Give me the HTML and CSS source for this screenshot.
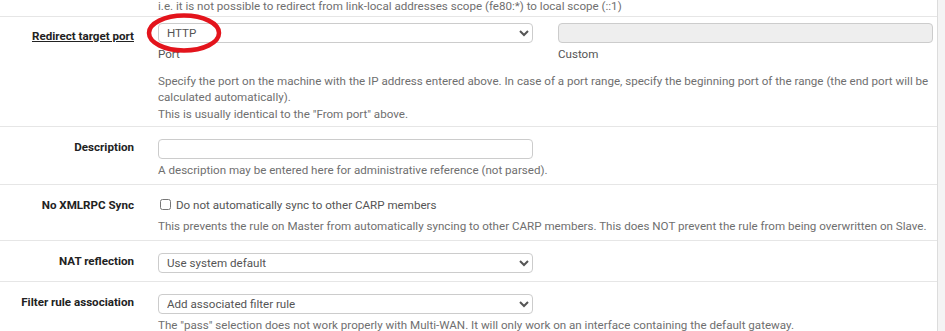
FILE: index.html
```html
<!DOCTYPE html>
<html lang="en">

<head>
  <meta charset="UTF-8" />
  <title>Port Forward - Edit</title>
  <link rel="stylesheet" href="styles.css">
</head>

<body>
  <div class="panel">
    <div class="row row-top">
      <div class="label"></div>
      <div class="field">
        <span class="help">i.e. it is not possible to redirect from link-local addresses scope (fe80:*) to local scope (::1)</span>
      </div>
    </div>

    <div class="row row-port">
      <div class="label"><span class="underline">Redirect target port</span></div>
      <div class="field">
        <div class="pair">
          <div class="col">
            <div class="mark-wrap">
              <select class="control">
                <option>HTTP</option>
              </select>
              <svg class="mark" width="80" height="44" viewBox="0 0 80 44">
                <ellipse cx="40" cy="22" rx="35" ry="17.5" fill="none" stroke="#e3141c" stroke-width="4.5" />
              </svg>
            </div>
            <span class="sub">Port</span>
          </div>
          <div class="col">
            <input class="control" type="text" disabled>
            <span class="sub">Custom</span>
          </div>
        </div>
        <span class="help block">Specify the port on the machine with the IP address entered above. In case of a port range, specify the beginning port of the range (the end port will be calculated automatically).<br>This is usually identical to the "From port" above.</span>
      </div>
    </div>

    <div class="row row-desc">
      <div class="label">Description</div>
      <div class="field">
        <input class="control half" type="text">
        <span class="help">A description may be entered here for administrative reference (not parsed).</span>
      </div>
    </div>

    <div class="row row-loose">
      <div class="label">No XMLRPC Sync</div>
      <div class="field">
        <label class="check"><input type="checkbox"> Do not automatically sync to other CARP members</label>
        <span class="help">This prevents the rule on Master from automatically syncing to other CARP members. This does NOT prevent the rule from being overwritten on Slave.</span>
      </div>
    </div>

    <div class="row row-plain">
      <div class="label">NAT reflection</div>
      <div class="field">
        <select class="control half">
          <option>Use system default</option>
        </select>
      </div>
    </div>

    <div class="row">
      <div class="label">Filter rule association</div>
      <div class="field">
        <select class="control half">
          <option>Add associated filter rule</option>
        </select>
        <span class="help">The "pass" selection does not work properly with Multi-WAN. It will only work on an interface containing the default gateway.</span>
      </div>
    </div>
  </div>
</body>

</html>
```

FILE: styles.css
```css
body {
  margin: 0;
  background-color: #f4f4f4;
  font-family: Roboto, "Liberation Sans", Arial, sans-serif;
  font-size: 11.6px;
  color: #555;
  overflow: hidden;
  height: 331px;
}

.panel {
  width: 937px;
  background-color: white;
  border-right: 1px solid #dcdcdc;
  min-height: 331px;
}

.row {
  display: grid;
  grid-template-columns: 134px 1fr;
  column-gap: 24px;
  padding: 12px 4px 4px 0;
  border-top: 1px solid #e6e6e6;
}

.row-top {
  border-top: none;
  margin-top: -2px;
  padding-top: 0;
  padding-bottom: 1px;
}

.row-port {
  padding-top: 6px;
}

.row-desc {
  padding-bottom: 5px;
}

.row-loose {
  padding-bottom: 6px;
}

.row-plain {
  padding-bottom: 8px;
}

.label {
  text-align: right;
  font-weight: bold;
  color: #222;
  line-height: 16px;
}

.row-port .label {
  padding-top: 5px;
}

.underline {
  text-decoration: underline;
}

.field {
  display: flex;
  flex-direction: column;
}

.pair {
  display: grid;
  grid-template-columns: 1fr 1fr;
  column-gap: 25px;
}

.col {
  display: flex;
  flex-direction: column;
}

.control {
  box-sizing: border-box;
  height: 20px;
  border: 1px solid #ccc;
  border-radius: 4px;
  background-color: white;
  font-family: inherit;
  font-size: 11.6px;
  color: #555;
  padding: 0 4px;
  width: 100%;
}

input.control:disabled {
  background-color: #eee;
}

.half {
  width: 375px;
}

.mark-wrap {
  position: relative;
}

.mark {
  position: absolute;
  left: -14px;
  top: -12px;
}

.sub {
  line-height: 17px;
  margin-top: 3px;
}

.help {
  line-height: 16.5px;
  color: #6f6f6f;
}

.row .field > .help {
  margin-top: 3px;
}

.row .field > .block {
  margin-top: 10px;
}

.row-loose .field > .help {
  margin-top: 5px;
}

.row-top .field > .help {
  margin-top: 0;
}

.check {
  display: flex;
  align-items: center;
  gap: 5px;
  line-height: 16px;
}

.check input {
  margin: 0 0 0 2px;
  width: 11px;
  height: 11px;
}
```
